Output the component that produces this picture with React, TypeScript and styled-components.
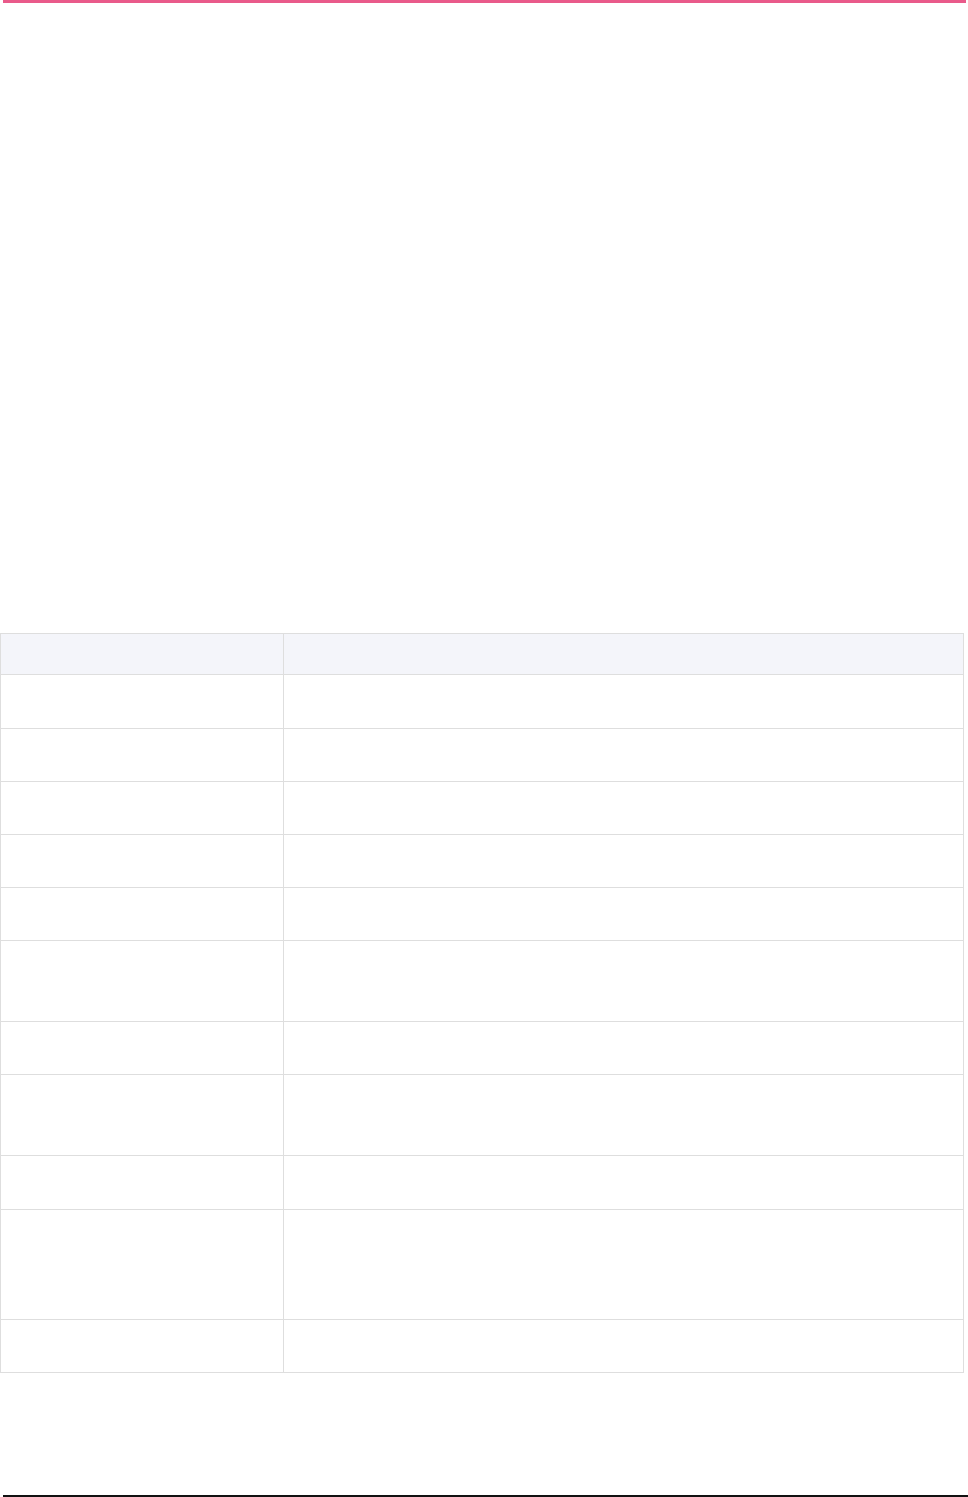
import React from 'react'
import styled, { createGlobalStyle } from 'styled-components'

const GlobalStyle = createGlobalStyle`
  html, body {
    margin: 0;
    padding: 0;
    background: #ffffff;
    font-family: Inter, "Noto Sans", "Liberation Sans", sans-serif;
    color: #ffffff;
  }
`

const Page = styled.div`
  width: 968px;
  display: flex;
  flex-direction: column;
`

const TopBar = styled.div`
  height: 3px;
  margin-left: 3px;
  margin-right: 2px;
  background: #e95a8a;
`

const Hero = styled.section`
  height: 630px;
`

const Table = styled.table`
  width: 964px;
  border-collapse: collapse;
  table-layout: fixed;
  border: 1px solid #dedede;
  font-size: 14px;
`

const HeadCell = styled.th<{ $w?: number }>`
  box-sizing: border-box;
  width: ${({ $w }) => ($w ? `${$w}px` : 'auto')};
  height: 41px;
  padding: 0 16px;
  background: #f4f5fa;
  border: 1px solid #dedede;
  text-align: left;
  font-weight: 600;
  color: transparent;
`

const Row = styled.tr<{ $h: number }>`
  height: ${({ $h }) => $h}px;
`

const Cell = styled.td`
  padding: 12px 16px;
  border: 1px solid #dedede;
  vertical-align: top;
  line-height: 28px;
  color: transparent;
`

const Footer = styled.footer`
  margin-top: 122px;
  margin-left: 3px;
  border-top: 2px solid #111111;
  height: 0;
`

const rows = [54, 53, 53, 53, 53, 81, 53, 81, 54, 110, 53]

const App = () => (
  <>
    <GlobalStyle />
    <Page>
      <TopBar />
      <Hero />
      <Table>
        <thead>
          <tr>
            <HeadCell $w={283} />
            <HeadCell />
          </tr>
        </thead>
        <tbody>
          {rows.map((h, i) => (
            <Row key={i} $h={h}>
              <Cell />
              <Cell />
            </Row>
          ))}
        </tbody>
      </Table>
      <Footer />
    </Page>
  </>
)

export default App
